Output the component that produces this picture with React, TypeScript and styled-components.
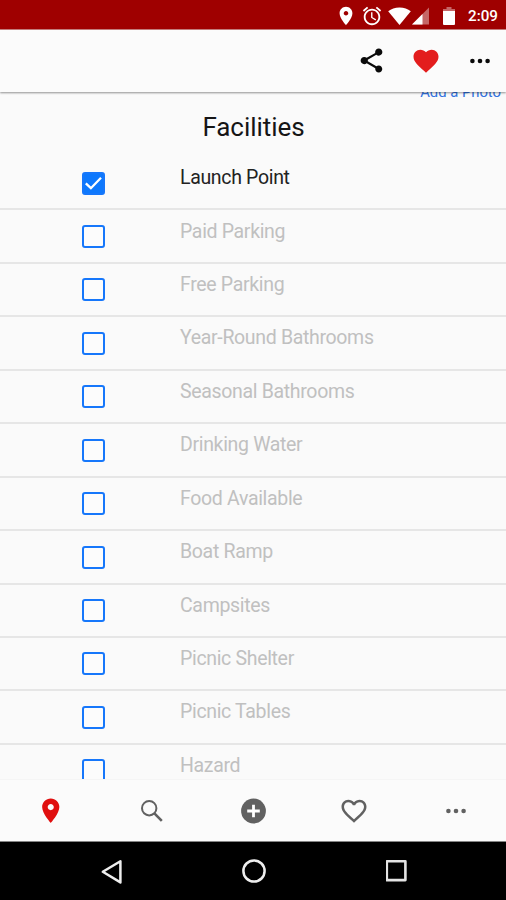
import React from "react";
import styled, { createGlobalStyle } from "styled-components";

const GlobalStyle = createGlobalStyle`
  * { box-sizing: border-box; }
  body { margin: 0; background: #fafafa; font-family: Roboto, "Liberation Sans", sans-serif; }
  svg { display: block; flex: none; }
`;

const Screen = styled.div`
  display: flex;
  flex-direction: column;
  width: 506px;
  height: 900px;
  overflow: hidden;
  background: #fafafa;
`;

const StatusBar = styled.header`
  flex: none;
  height: 30px;
  display: flex;
  align-items: center;
  justify-content: flex-end;
  padding: 2px 9px 0 0;
  background: #9f0000;
  border-bottom: 1px solid #c9807f;
  color: #fff;
`;

const StatusIcon = styled.span<{ $gap: number }>`
  margin-right: ${(p) => p.$gap}px;
`;

const Clock = styled.span`
  width: 29px;
  font-size: 15.2px;
  font-weight: 500;
  line-height: 18px;
  white-space: nowrap;
`;

const Toolbar = styled.div`
  flex: none;
  height: 62px;
  display: flex;
  align-items: center;
  justify-content: flex-end;
  gap: 25px;
  padding: 0 12.5px 1px 0;
  background: #fbfbfb;
  box-shadow: 0 1px 2px rgba(0, 0, 0, 0.42);
  z-index: 1;
`;

const ToolButton = styled.button`
  border: 0;
  padding: 0;
  background: none;
  color: #0a0a0a;
`;

const Content = styled.main`
  flex: 1;
  min-height: 0;
  overflow: hidden;
`;

const PhotoLink = styled.a`
  display: block;
  margin-top: -10px;
  padding-right: 5px;
  height: 20px;
  line-height: 20px;
  text-align: right;
  font-size: 14.8px;
  color: #3273e0;
`;

const Title = styled.h1`
  margin: 0;
  height: 55px;
  padding: 8.5px 0 0 1px;
  text-align: center;
  font-size: 26px;
  line-height: 32px;
  font-weight: 400;
  letter-spacing: -0.05px;
  color: #151515;
`;

const Row = styled.label`
  display: grid;
  grid-template-columns: 81.5px 98.5px 1fr;
  height: 53.45px;
  border-bottom: 2px solid #e6e6e6;
`;

const Box = styled.span<{ $on: boolean }>`
  grid-column: 2;
  width: 23px;
  height: 23px;
  margin-top: 14.5px;
  border: 2px solid #1677fb;
  border-radius: 3px;
  background: ${(p) => (p.$on ? "#0d78fd" : "#fcfcfc")};
`;

const Label = styled.span<{ $on: boolean }>`
  padding-top: 9.1px;
  font-size: 19.5px;
  line-height: 24px;
  letter-spacing: -0.33px;
  color: ${(p) => (p.$on ? "#222" : "#c0c0c0")};
`;

const TabBar = styled.nav`
  flex: none;
  height: 63px;
  display: grid;
  grid-template-columns: 101px repeat(4, 101.4px);
  place-items: center;
  background: #fbfbfb;
  border-top: 1px solid #f5f5f5;
  border-bottom: 1px solid #858585;
  color: #616161;
`;

const SystemBar = styled.footer`
  flex: none;
  height: 58px;
  display: flex;
  align-items: center;
  gap: 116px;
  padding: 0 0 0 98px;
  background: #000;
`;

const HEART =
  "M12 21.35l-1.45-1.32C5.4 15.36 2 12.28 2 8.5 2 5.42 4.42 3 7.5 3c1.74 0 3.41.81 4.5 2.09C13.09 3.81 14.76 3 16.5 3 19.58 3 22 5.42 22 8.5c0 3.78-3.4 6.86-8.55 11.54L12 21.35z";
const PIN =
  "M12 2C8.13 2 5 5.13 5 9c0 5.25 7 13 7 13s7-7.75 7-13c0-3.87-3.13-7-7-7zm0 9.5c-1.38 0-2.5-1.12-2.5-2.5s1.12-2.5 2.5-2.5 2.5 1.12 2.5 2.5-1.12 2.5-2.5 2.5z";
const ALARM =
  "M22 5.72l-4.6-3.86-1.29 1.53 4.6 3.86L22 5.72zM7.88 3.39L6.6 1.86 2 5.71l1.29 1.53 4.59-3.85zM12.5 8H11v6l4.75 2.85.75-1.23-4-2.37V8zM12 4c-4.97 0-9 4.03-9 9s4.02 9 9 9c4.97 0 9-4.03 9-9s-4.03-9-9-9zm0 16c-3.87 0-7-3.13-7-7s3.13-7 7-7 7 3.13 7 7-3.13 7-7 7z";
const HEART_OUTLINE =
  "M16.5 3c-1.74 0-3.41.81-4.5 2.09C10.91 3.81 9.24 3 7.5 3 4.42 3 2 5.42 2 8.5c0 3.78 3.4 6.86 8.55 11.54L12 21.35l1.45-1.32C18.6 15.36 22 12.28 22 8.5 22 5.42 19.58 3 16.5 3zm-4.4 15.55l-.1.1-.1-.1C7.14 14.24 4 11.39 4 8.5 4 6.5 5.5 5 7.5 5c1.54 0 3.04.99 3.57 2.36h1.87C13.46 5.99 14.96 5 16.5 5c2 0 3.5 1.5 3.5 3.5 0 2.89-3.14 5.74-7.9 10.05z";
const SHARE =
  "M18 16.08c-.76 0-1.44.3-1.96.77L8.91 12.7c.05-.23.09-.46.09-.7s-.04-.47-.09-.7l7.05-4.11c.54.5 1.25.81 2.04.81 1.66 0 3-1.34 3-3s-1.34-3-3-3-3 1.34-3 3c0 .24.04.47.09.7L8.04 9.81C7.5 9.31 6.79 9 6 9c-1.66 0-3 1.34-3 3s1.34 3 3 3c.79 0 1.5-.31 2.04-.81l7.12 4.16c-.05.21-.08.43-.08.65 0 1.61 1.31 2.92 2.92 2.92s2.92-1.31 2.92-2.92-1.31-2.92-2.92-2.92z";

const Glyph = ({ d, size, color = "currentColor" }: { d: string; size: number; color?: string }) => (
  <svg width={size} height={size} viewBox="0 0 24 24" fill={color}>
    <path d={d} />
  </svg>
);

const Dots = () => (
  <svg width="28" height="28" viewBox="0 0 28 28" fill="currentColor">
    <circle cx="6.4" cy="14" r="2.3" />
    <circle cx="14" cy="14" r="2.3" />
    <circle cx="21.6" cy="14" r="2.3" />
  </svg>
);

const facilities = [
  "Launch Point",
  "Paid Parking",
  "Free Parking",
  "Year-Round Bathrooms",
  "Seasonal Bathrooms",
  "Drinking Water",
  "Food Available",
  "Boat Ramp",
  "Campsites",
  "Picnic Shelter",
  "Picnic Tables",
  "Hazard",
];

export default function App() {
  return (
    <Screen>
      <GlobalStyle />
      <StatusBar>
        <StatusIcon $gap={3.5}>
          <Glyph d={PIN} size={22} />
        </StatusIcon>
        <StatusIcon $gap={5}>
          <Glyph d={ALARM} size={22} />
        </StatusIcon>
        <StatusIcon $gap={1.5}>
          <svg width="23" height="18" viewBox="0 0 23 18" fill="#fff">
            <path d="M11.5 18 L0.2 4.2 C3.2 1.7 7 .4 11.5 .4 S19.8 1.7 22.8 4.2Z" />
          </svg>
        </StatusIcon>
        <StatusIcon $gap={14}>
          <svg width="17" height="18" viewBox="0 0 17 18">
            <path d="M17 0.5V17.5H0Z" fill="#c56767" />
            <path d="M10.5 7V17.5H0Z" fill="#fff" />
          </svg>
        </StatusIcon>
        <StatusIcon $gap={13}>
          <svg width="12" height="18" viewBox="0 0 12 18">
            <path d="M0 4V2H3.5V0H8.5V2H12V4Z" fill="#c56767" />
            <path d="M0 4H12V17Q12 18 11 18H1Q0 18 0 17Z" fill="#fff" />
          </svg>
        </StatusIcon>
        <Clock>2:09</Clock>
      </StatusBar>
      <Toolbar>
        <ToolButton aria-label="Share">
          <Glyph d={SHARE} size={29} />
        </ToolButton>
        <ToolButton aria-label="Favorite">
          <Glyph d={HEART} size={30} color="#e31d1d" />
        </ToolButton>
        <ToolButton aria-label="More">
          <Dots />
        </ToolButton>
      </Toolbar>
      <Content>
        <PhotoLink>Add a Photo</PhotoLink>
        <Title>Facilities</Title>
        {facilities.map((name, i) => (
          <Row key={name}>
            <Box $on={i === 0}>
              {i === 0 && (
                <svg width="19" height="19" viewBox="0 0 19 19" fill="none" stroke="#fff" strokeWidth="2.3">
                  <path d="M1.8 9.3L6.9 14.2L17 3.8" />
                </svg>
              )}
            </Box>
            <Label $on={i === 0}>{name}</Label>
          </Row>
        ))}
      </Content>
      <TabBar>
        <Glyph d={PIN} size={29.5} color="#e00f0f" />
        <svg width="22" height="22" viewBox="0 0 22 22" fill="none" stroke="currentColor">
          <circle cx="8.2" cy="8.2" r="7.2" strokeWidth="2" />
          <path d="M13.4 13.4L20.8 20.8" strokeWidth="2.6" />
        </svg>
        <svg width="26" height="26" viewBox="0 0 26 26">
          <circle cx="13.5" cy="13" r="12.4" fill="currentColor" />
          <path d="M13.5 6.7V19.3M7.2 13H19.8" stroke="#fff" strokeWidth="2.8" />
        </svg>
        <Glyph d={HEART_OUTLINE} size={30} />
        <Dots />
      </TabBar>
      <SystemBar>
        <svg width="28" height="28" viewBox="0 0 28 28" fill="none" stroke="#eee" strokeWidth="2.5" strokeLinejoin="round">
          <path d="M22.4 4.2V25.4L4.8 14.8Z" />
        </svg>
        <svg width="28" height="28" viewBox="0 0 28 28" fill="none" stroke="#eee" strokeWidth="2.5">
          <circle cx="12" cy="14" r="10.6" />
        </svg>
        <svg width="28" height="28" viewBox="0 0 28 28" fill="none" stroke="#e4e4e4" strokeWidth="2.6" strokeLinejoin="round">
          <rect x="0.8" y="4.3" width="18.6" height="18.8" />
        </svg>
      </SystemBar>
    </Screen>
  );
}
